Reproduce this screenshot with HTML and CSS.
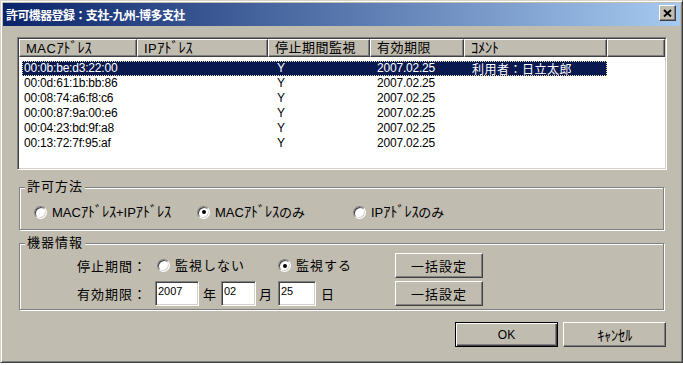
FILE: index.html
```html
<!DOCTYPE html>
<html lang="ja">
<head>
    <meta charset="UTF-8">
    <meta name="viewport" content="width=device-width, initial-scale=1.0">
    <title>許可機器登録</title>
    <link rel="stylesheet" href="styles.css">
</head>
<body>
    <div class="window">
        <div class="title-bar">
            <span class="title">許可機器登録：支社-九州-博多支社</span>
            <button class="close-btn">
                <svg width="9" height="8" viewBox="0 0 9 8"><path d="M1 1L8 7.5M8 1L1 7.5" stroke="#000" stroke-width="1.8"/></svg>
            </button>
        </div>
        <div class="content">
            <div class="list-view">
                <div class="list-header">
                    <div class="col c-mac">MAC<span class="hw">ｱﾄﾞﾚｽ</span></div>
                    <div class="col c-ip">IP<span class="hw">ｱﾄﾞﾚｽ</span></div>
                    <div class="col c-stop">停止期間監視</div>
                    <div class="col c-exp">有効期限</div>
                    <div class="col c-cmt"><span class="hw">ｺﾒﾝﾄ</span></div>
                    <div class="col c-fill"></div>
                </div>
                <div class="list-body">
                    <div class="row selected">
                        <span class="cell c-mac">00:0b:be:d3:22:00</span>
                        <span class="cell c-ip"></span>
                        <span class="cell c-stop">Y</span>
                        <span class="cell c-exp">2007.02.25</span>
                        <span class="cell c-cmt jp">利用者：日立太郎</span>
                    </div>
                    <div class="row">
                        <span class="cell c-mac">00:0d:61:1b:bb:86</span>
                        <span class="cell c-ip"></span>
                        <span class="cell c-stop">Y</span>
                        <span class="cell c-exp">2007.02.25</span>
                        <span class="cell c-cmt"></span>
                    </div>
                    <div class="row">
                        <span class="cell c-mac">00:08:74:a6:f8:c6</span>
                        <span class="cell c-ip"></span>
                        <span class="cell c-stop">Y</span>
                        <span class="cell c-exp">2007.02.25</span>
                        <span class="cell c-cmt"></span>
                    </div>
                    <div class="row">
                        <span class="cell c-mac">00:00:87:9a:00:e6</span>
                        <span class="cell c-ip"></span>
                        <span class="cell c-stop">Y</span>
                        <span class="cell c-exp">2007.02.25</span>
                        <span class="cell c-cmt"></span>
                    </div>
                    <div class="row">
                        <span class="cell c-mac">00:04:23:bd:9f:a8</span>
                        <span class="cell c-ip"></span>
                        <span class="cell c-stop">Y</span>
                        <span class="cell c-exp">2007.02.25</span>
                        <span class="cell c-cmt"></span>
                    </div>
                    <div class="row">
                        <span class="cell c-mac">00:13:72:7f:95:af</span>
                        <span class="cell c-ip"></span>
                        <span class="cell c-stop">Y</span>
                        <span class="cell c-exp">2007.02.25</span>
                        <span class="cell c-cmt"></span>
                    </div>
                </div>
            </div>

            <fieldset class="group">
                <legend>許可方法</legend>
                <div class="group-body method-body">
                    <label class="radio-item w1"><span class="radio"></span><span>MAC<span class="hw">ｱﾄﾞﾚｽ</span>+IP<span class="hw">ｱﾄﾞﾚｽ</span></span></label>
                    <label class="radio-item w2"><span class="radio checked"></span><span>MAC<span class="hw">ｱﾄﾞﾚｽ</span>のみ</span></label>
                    <label class="radio-item"><span class="radio"></span><span>IP<span class="hw">ｱﾄﾞﾚｽ</span>のみ</span></label>
                </div>
            </fieldset>

            <fieldset class="group group-info">
                <legend>機器情報</legend>
                <div class="group-body info-body">
                    <div class="info-row">
                        <div class="fields">
                            <span class="field-label">停止期間：</span>
                            <label class="radio-item w3"><span class="radio"></span><span>監視しない</span></label>
                            <label class="radio-item"><span class="radio checked"></span><span>監視する</span></label>
                        </div>
                        <button class="btn btn-bulk">一括設定</button>
                    </div>
                    <div class="info-row">
                        <div class="fields">
                            <span class="field-label label-exp">有効期限：</span>
                            <span class="text-box tb-year">2007</span>
                            <span class="unit u-year">年</span>
                            <span class="text-box tb-month">02</span>
                            <span class="unit u-month">月</span>
                            <span class="text-box tb-day">25</span>
                            <span class="unit u-day">日</span>
                        </div>
                        <button class="btn btn-bulk">一括設定</button>
                    </div>
                </div>
            </fieldset>

            <div class="actions">
                <button class="btn btn-ok">OK</button>
                <button class="btn btn-cancel"><span class="hw">ｷｬﾝｾﾙ</span></button>
            </div>
        </div>
    </div>
</body>
</html>
```

FILE: styles.css
```css
* {
    box-sizing: border-box;
}

body {
    margin: 0;
    padding: 0;
    background-color: #fff;
    font-family: "Liberation Sans", "Noto Sans CJK JP", sans-serif;
    font-size: 13px;
    color: #000;
}

.hw {
    font-size: 14.5px;
    letter-spacing: -0.3px;
}

.window {
    width: 683px;
    height: 363px;
    background-color: #c0bcb0;
    border: 1px solid;
    border-color: #d8d4ca #404040 #404040 #d8d4ca;
    box-shadow: inset 1px 1px #fff, inset -1px -1px #808080;
    padding: 2px;
    display: flex;
    flex-direction: column;
}

.title-bar {
    height: 23px;
    display: flex;
    justify-content: space-between;
    padding: 0 4px 0 3px;
    background: linear-gradient(to right, #0a246a, #a6caf0);
}

.title {
    color: #fff;
    font-family: "Noto Sans CJK JP", sans-serif;
    font-weight: bold;
    font-size: 12px;
    line-height: 23px;
    letter-spacing: -0.6px;
}

.close-btn {
    width: 17px;
    height: 16px;
    margin-top: 2px;
    padding: 0;
    display: flex;
    align-items: center;
    justify-content: center;
    background-color: #c0bcb0;
    border: 1px solid;
    border-color: #fff #404040 #404040 #fff;
    box-shadow: inset -1px -1px #808080;
}

.content {
    padding: 11px 13px 0 14px;
    display: flex;
    flex-direction: column;
}

/* list view */
.list-view {
    height: 133px;
    background-color: #fff;
    border: 1px solid;
    border-color: #808080 #fff #fff #808080;
    box-shadow: inset 1px 1px #404040, inset -1px -1px #d4d0c8;
    padding: 1px;
}

.list-header {
    display: flex;
    height: 18px;
}

.list-header .col {
    height: 18px;
    background-color: #c0bcb0;
    border: 1px solid;
    border-color: #fff #404040 #404040 #fff;
    box-shadow: inset -1px -1px #808080;
    padding-left: 6px;
    line-height: 16px;
    font-size: 13px;
    letter-spacing: 0.5px;
    white-space: nowrap;
    overflow: hidden;
}

.c-mac { width: 118px; flex: none; }
.c-ip { width: 131px; flex: none; }
.c-stop { width: 102px; flex: none; }
.c-exp { width: 94px; flex: none; }
.c-cmt { width: 143px; flex: none; }
.list-header .c-fill { flex: 1; }

.list-body {
    padding-top: 4px;
}

.row {
    display: flex;
    width: 585px;
    height: 15px;
    margin-left: 3px;
    font-size: 12px;
    line-height: 15px;
    letter-spacing: -0.2px;
}

.row .cell {
    padding-left: 7px;
    white-space: nowrap;
}

.row .c-mac {
    width: 115px;
    padding-left: 2px;
}

.row .c-stop {
    padding-left: 9px;
}

.row .c-cmt {
    padding-left: 8px;
}

.row .jp {
    font-family: "Noto Sans CJK JP", sans-serif;
    font-size: 12px;
    letter-spacing: 0.5px;
}

.row.selected {
    background-color: #0a1850;
    color: #fff;
    outline: 1px dotted #e8e0b0;
    outline-offset: -1px;
}

/* group boxes */
.group {
    margin: 9px 3px 0 2px;
    padding: 0;
    border: 1px solid #808080;
    box-shadow: inset 1px 1px #fff, 1px 1px #fff;
    min-width: 0;
}

.group legend {
    margin-left: 5px;
    padding: 0 2px;
    background-color: #c0bcb0;
    line-height: 16px;
    font-size: 13px;
    letter-spacing: 1px;
}

.group-info {
    margin-top: 5px;
}

.method-body {
    display: flex;
    align-items: center;
    height: 34px;
    padding: 9px 0 9px 14px;
}

.info-body {
    padding: 2px 0 3px 57px;
}

.radio-item {
    display: flex;
    align-items: center;
    gap: 5px;
    line-height: 16px;
    white-space: nowrap;
}

.radio-item.w1 { width: 163px; }
.radio-item.w2 { width: 156px; }
.radio-item.w3 { width: 121px; letter-spacing: 1px; }

.radio {
    width: 13px;
    height: 13px;
    flex: none;
    border-radius: 50%;
    background-color: #fff;
    border: 1px solid;
    border-color: #808080 #fff #fff #808080;
    box-shadow: inset 1px 1px #404040, inset -1px -1px #d4d0c8;
    display: flex;
    align-items: center;
    justify-content: center;
}

.radio.checked::after {
    content: "";
    width: 4px;
    height: 4px;
    border-radius: 50%;
    background-color: #000;
}

.info-row {
    display: flex;
    align-items: center;
    height: 25px;
}

.info-row + .info-row {
    margin-top: 3px;
}

.fields {
    width: 318px;
    display: flex;
    align-items: center;
    letter-spacing: 1px;
}

.field-label {
    width: 80px;
    flex: none;
    white-space: nowrap;
}

.field-label.label-exp {
    width: 78px;
}

.text-box {
    height: 25px;
    background-color: #fff;
    border: 1px solid;
    border-color: #808080 #fff #fff #808080;
    box-shadow: inset 1px 1px #404040, inset -1px -1px #d4d0c8;
    padding: 3px 0 0 2px;
    font-size: 11px;
    line-height: 13px;
    letter-spacing: 0;
}

.tb-year { width: 44px; }
.tb-month { width: 35px; }
.tb-day { width: 38px; }

.unit {
    padding-left: 4px;
}

.u-year { width: 22px; }
.u-month { width: 22px; padding-left: 3px; }
.u-day { padding-left: 5px; }

/* buttons */
.btn {
    height: 25px;
    padding: 0;
    background-color: #c0bcb0;
    border: 1px solid;
    border-color: #fff #404040 #404040 #fff;
    box-shadow: inset -1px -1px #808080;
    font-family: "Liberation Sans", "Noto Sans CJK JP", sans-serif;
    font-size: 13px;
    color: #000;
}

.btn-bulk {
    width: 88px;
    letter-spacing: 1px;
}

.actions {
    display: flex;
    justify-content: flex-end;
    gap: 5px;
    margin-top: 12px;
    padding-right: 1px;
}

.btn-ok {
    width: 103px;
    border: 1px solid #000;
    box-shadow: inset 1px 1px #fff, inset -1px -1px #404040, inset -2px -2px #808080;
    font-size: 12px;
}

.btn-cancel {
    width: 103px;
}
```
